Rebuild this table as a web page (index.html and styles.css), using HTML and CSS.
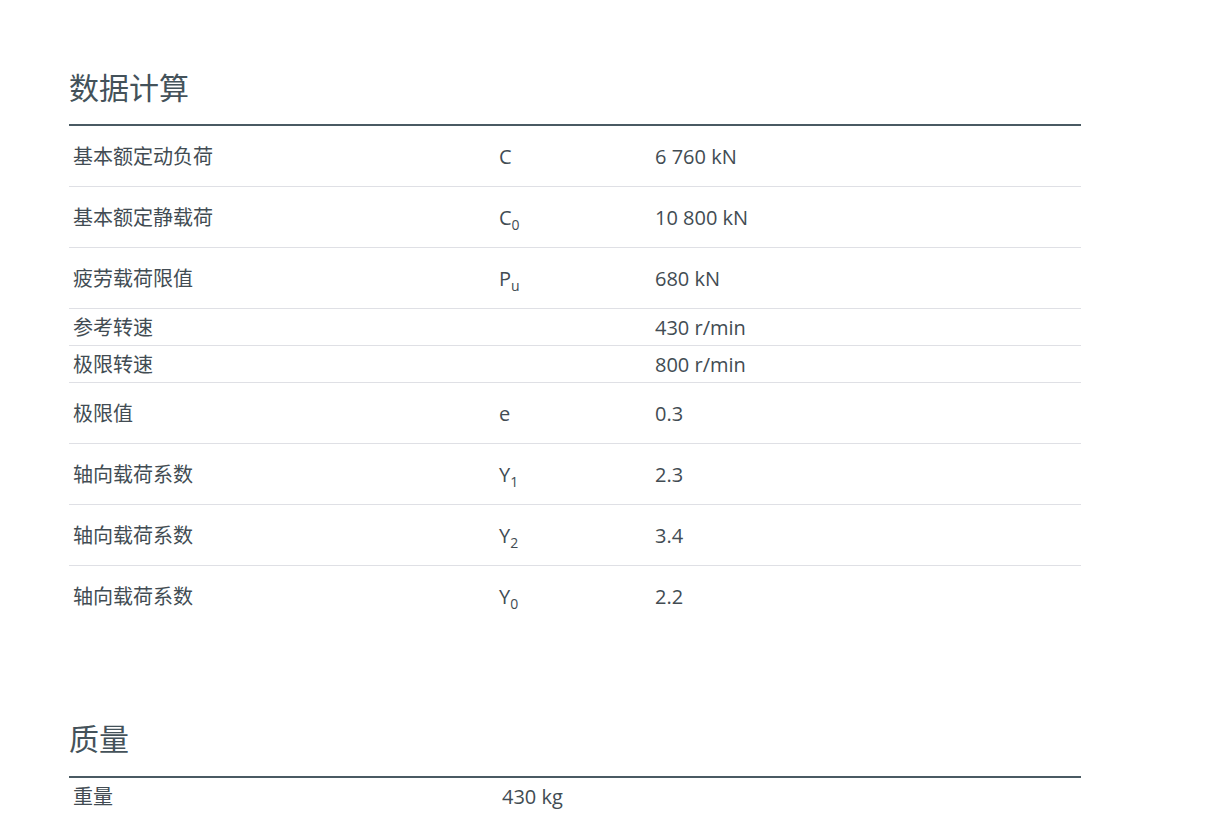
FILE: index.html
```html
<!DOCTYPE html>
<html lang="zh">
<head>
<meta charset="utf-8">
<title>数据计算</title>
<link rel="stylesheet" href="styles.css">
</head>
<body>
<main class="page">
  <section class="section">
    <h2 class="section-title">数据计算</h2>
    <table class="data-table">
      <colgroup><col class="c-label"><col class="c-sym"><col class="c-val"></colgroup>
      <tbody>
        <tr class="tall"><td>基本额定动负荷</td><td>C</td><td>6 760 kN</td></tr>
        <tr class="tall"><td>基本额定静载荷</td><td>C<sub>0</sub></td><td>10 800 kN</td></tr>
        <tr class="tall"><td>疲劳载荷限值</td><td>P<sub>u</sub></td><td>680 kN</td></tr>
        <tr class="short"><td>参考转速</td><td></td><td>430 r/min</td></tr>
        <tr class="short"><td>极限转速</td><td></td><td>800 r/min</td></tr>
        <tr class="tall"><td>极限值</td><td>e</td><td>0.3</td></tr>
        <tr class="tall"><td>轴向载荷系数</td><td>Y<sub>1</sub></td><td>2.3</td></tr>
        <tr class="tall"><td>轴向载荷系数</td><td>Y<sub>2</sub></td><td>3.4</td></tr>
        <tr class="tall last"><td>轴向载荷系数</td><td>Y<sub>0</sub></td><td>2.2</td></tr>
      </tbody>
    </table>
  </section>
  <section class="section section-mass">
    <h2 class="section-title">质量</h2>
    <table class="data-table">
      <colgroup><col class="c-label2"><col></colgroup>
      <tbody>
        <tr class="short last"><td>重量</td><td>430 kg</td></tr>
      </tbody>
    </table>
  </section>
</main>
</body>
</html>
```

FILE: styles.css
```css
html, body {
  margin: 0;
  padding: 0;
  background: #ffffff;
}
body {
  font-family: "Open Sans", "Noto Sans CJK SC", sans-serif;
  color: #424c53;
}
.page {
  width: 1012px;
  padding: 70px 0 0 69px;
}
.section-title {
  margin: 0;
  font-size: 30px;
  line-height: 36px;
  font-weight: 400;
  color: #44525a;
  padding-bottom: 18px;
  border-bottom: 2px solid #4a5a63;
}
.section-mass {
  margin-top: 95px;
}
.section-mass .section-title {
  padding-bottom: 19px;
}
.data-table {
  width: 100%;
  border-collapse: collapse;
  table-layout: fixed;
  font-size: 20px;
}
.c-label { width: 426px; }
.c-sym { width: 156px; }
.c-label2 { width: 429px; }
.data-table td {
  padding: 1px 4px 0;
  line-height: 24px;
  vertical-align: middle;
  white-space: nowrap;
}
.data-table tr { border-bottom: 1px solid #dfe0e5; }
.data-table tr.last { border-bottom: none; }
.data-table tr.tall td { height: 59px; }
.data-table tr.short td { height: 35px; }
sub {
  font-size: 14px;
  line-height: 0;
  vertical-align: -5px;
}
```
